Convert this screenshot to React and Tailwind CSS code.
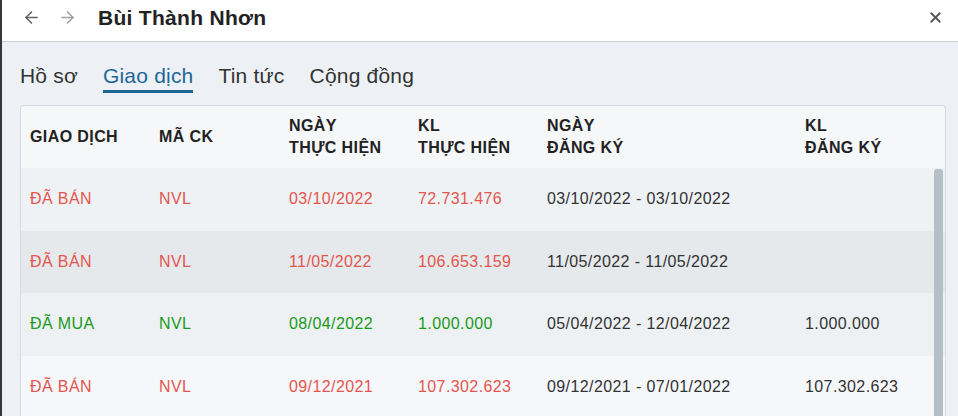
import React from "react";
import { ArrowLeft, ArrowRight, X } from "lucide-react";

const rows = [
  { type: "ĐÃ BÁN", code: "NVL", date: "03/10/2022", kl: "72.731.476", reg: "03/10/2022 - 03/10/2022", klReg: "", buy: false, bg: "bg-[#eef2f5]" },
  { type: "ĐÃ BÁN", code: "NVL", date: "11/05/2022", kl: "106.653.159", reg: "11/05/2022 - 11/05/2022", klReg: "", buy: false, bg: "bg-[#e5e9ec]" },
  { type: "ĐÃ MUA", code: "NVL", date: "08/04/2022", kl: "1.000.000", reg: "05/04/2022 - 12/04/2022", klReg: "1.000.000", buy: true, bg: "bg-[#eef1f4]" },
  { type: "ĐÃ BÁN", code: "NVL", date: "09/12/2021", kl: "107.302.623", reg: "09/12/2021 - 07/01/2022", klReg: "107.302.623", buy: false, bg: "bg-[#f5f7fa]" },
];

const cols = "grid grid-cols-[129px_130px_129px_129px_258px_1fr]";

const App = () => {
  return (
    <div className="flex h-[416px] w-[958px] overflow-hidden font-['Liberation_Sans',Arial,sans-serif] text-[#333]">
      <div className="w-[2px] bg-[#34373c]" />
      <div className="flex flex-1 flex-col bg-[#edf1f5]">
        {/* top bar */}
        <div className="flex h-[42px] items-center border-b border-[#c9ced3] bg-white pb-[6px] pl-[20px] pr-[14px]">
          <ArrowLeft size={19} strokeWidth={2} className="text-[#5f6368]" />
          <ArrowRight size={19} strokeWidth={2} className="ml-[17px] text-[#9aa0a6]" />
          <h1 className="ml-[21px] text-[21px] font-bold tracking-[0.3px] text-[#222]">Bùi Thành Nhơn</h1>
          <X size={17} strokeWidth={2.6} className="ml-auto text-[#555]" />
        </div>

        {/* tabs */}
        <div className="flex gap-[25px] pl-[18px] pt-[20px] text-[21px] leading-[28px] tracking-[0.2px]">
          <span className="pb-[3px]">Hồ sơ</span>
          <span className="border-b-[3px] border-[#1d6796] text-[#1d6796]">Giao dịch</span>
          <span>Tin tức</span>
          <span>Cộng đồng</span>
        </div>

        {/* table */}
        <div className="ml-[18px] mr-[12px] mt-[12px] flex-1 overflow-hidden rounded-t-[4px] border border-b-0 border-[#d5dbe0] bg-[#f5f7f9]">
          <div className={`${cols} h-[62px] items-center pl-[9px] text-[16px] font-bold leading-[22px] tracking-[0.4px] text-[#222]`}>
            <div>GIAO DỊCH</div>
            <div>MÃ CK</div>
            <div>NGÀY<br />THỰC HIỆN</div>
            <div>KL<br />THỰC HIỆN</div>
            <div>NGÀY<br />ĐĂNG KÝ</div>
            <div>KL<br />ĐĂNG KÝ</div>
          </div>
          <div className="relative">
            {rows.map((r, i) => {
              const c = r.buy ? "text-[#1a9a1a]" : "text-[#e4564d]";
              return (
                <div key={i} className={`${cols} h-[62.5px] items-center pl-[9px] pr-[14px] text-[16px] tracking-[0.4px] ${r.bg}`}>
                  <div className={c}>{r.type}</div>
                  <div className={c}>{r.code}</div>
                  <div className={c}>{r.date}</div>
                  <div className={c}>{r.kl}</div>
                  <div>{r.reg}</div>
                  <div>{r.klReg}</div>
                </div>
              );
            })}
            <div className="absolute bottom-0 right-[2px] top-[1px] w-[9px] rounded-t-[3px] bg-[#b4c0c6]" />
          </div>
        </div>
      </div>
    </div>
  );
};

export default App;
